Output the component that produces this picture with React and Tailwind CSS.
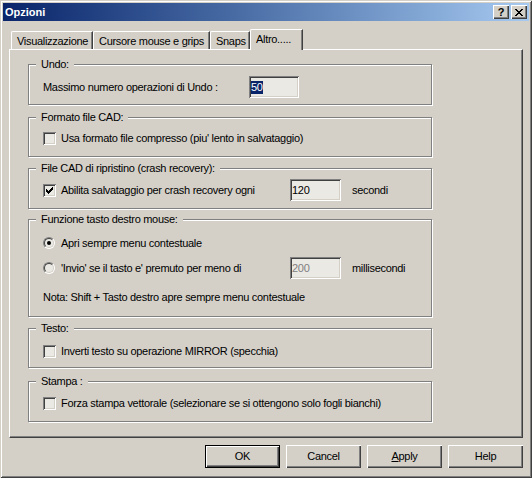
import React from "react";

const bevelOut =
  "shadow-[inset_1px_1px_0_#ffffff,inset_-1px_-1px_0_#404040,inset_-2px_-2px_0_#808080]";
const bevelIn =
  "shadow-[inset_1px_1px_0_#808080,inset_-1px_-1px_0_#ffffff,inset_2px_2px_0_#404040,inset_-2px_-2px_0_#d4d0c8]";

const Check = ({ checked }) => (
  <span className={`w-[13px] h-[13px] shrink-0 bg-[#ebe9e4] flex items-center justify-center ${bevelIn}`}>
    {checked && (
      <svg width="7" height="7" viewBox="0 0 7 7" shapeRendering="crispEdges">
        <path
          fill="#000"
          d="M6 0h1v1h-1z M5 1h2v1h-2z M0 2h1v1h-1z M4 2h3v1h-3z M0 3h2v1h-2z M3 3h3v1h-3z M0 4h5v1h-5z M1 5h3v1h-3z M2 6h1v1h-1z"
        />
      </svg>
    )}
  </span>
);

const Radio = ({ checked }) => (
  <span className="w-[12px] h-[12px] shrink-0 rounded-full bg-[#ebe9e4] flex items-center justify-center border border-t-[#808080] border-l-[#808080] border-b-white border-r-white">
    <span className="w-[10px] h-[10px] rounded-full border border-t-[#404040] border-l-[#404040] border-b-[#d4d0c8] border-r-[#d4d0c8] flex items-center justify-center">
      {checked && <span className="w-[4px] h-[4px] rounded-full bg-black" />}
    </span>
  </span>
);

const TextBox = ({ children, className = "" }) => (
  <div className={`h-[22px] bg-[#ebe9e4] flex items-center pl-[2px] ${bevelIn} ${className}`}>
    {children}
  </div>
);

const Group = ({ title, className = "", children }) => (
  <div
    className={`w-[404px] border border-[#808080] shadow-[inset_1px_1px_0_#ffffff,1px_1px_0_#ffffff] pl-[14px] ${className}`}
  >
    <div className="-mt-[7px] -ml-[7px] w-fit bg-[#d4d0c8] px-[5px] leading-[13px]">{title}</div>
    {children}
  </div>
);

const Tab = ({ label, width, selected }) => (
  <div
    className={`border-t border-l border-white border-r border-r-[#404040] rounded-tl-[2px] shadow-[inset_-1px_0_0_#808080] bg-[#d4d0c8] pl-[5px] flex items-center whitespace-nowrap overflow-hidden ${
      selected ? "h-[21px] -mb-[1px] relative z-10 pb-[1px]" : "h-[18px] pt-[2px]"
    } ${width}`}
  >
    {label}
  </div>
);

const Button = ({ children, isDefault }) => (
  <div
    className={`w-[75px] h-[23px] flex items-center justify-center bg-[#d4d0c8] ${
      isDefault
        ? "border border-black shadow-[inset_1px_1px_0_#ffffff,inset_-1px_-1px_0_#404040,inset_-2px_-2px_0_#808080]"
        : bevelOut
    }`}
  >
    {children}
  </div>
);

export default function App() {
  return (
    <div className="w-[532px] h-[478px] bg-[#d4d0c8] p-[3px] flex flex-col text-[11px] leading-[13px] tracking-[-0.3px] text-black font-['Liberation_Sans',Arial,sans-serif] shadow-[inset_1px_1px_0_#d4d0c8,inset_-1px_-1px_0_#404040,inset_2px_2px_0_#ffffff,inset_-2px_-2px_0_#808080]">
      {/* Title bar */}
      <div className="h-[18px] flex items-center bg-linear-to-r from-[#0a246a] to-[#a6caf0] pl-[2px] pr-[2px]">
        <span className="font-bold text-white text-[11px] tracking-normal">Opzioni</span>
        <div className="ml-auto flex gap-[2px]">
          <div className={`w-[16px] h-[14px] bg-[#d4d0c8] flex items-center justify-center font-bold text-[11px] ${bevelOut}`}>
            ?
          </div>
          <div className={`w-[16px] h-[14px] bg-[#d4d0c8] flex items-center justify-center ${bevelOut}`}>
            <svg width="8" height="7" viewBox="0 0 8 7" shapeRendering="crispEdges">
              <path
                fill="#000"
                d="M0 0h2v1h-2z M6 0h2v1h-2z M1 1h2v1h-2z M5 1h2v1h-2z M2 2h4v1h-4z M3 3h2v1h-2z M2 4h4v1h-4z M1 5h2v1h-2z M5 5h2v1h-2z M0 6h2v1h-2z M6 6h2v1h-2z"
              />
            </svg>
          </div>
        </div>
      </div>

      {/* Tabs */}
      <div className="mt-[8px] h-[20px] flex items-end ml-[8px]">
        <Tab label="Visualizzazione" width="w-[82px]" />
        <Tab label="Cursore mouse e grips" width="w-[117px]" />
        <Tab label="Snaps" width="w-[40px]" />
        <Tab label="Altro....." width="w-[53px]" selected />
      </div>

      {/* Panel */}
      <div className="mx-[6px] h-[389px] border-t border-l border-white border-r border-b border-r-[#404040] border-b-[#404040] shadow-[inset_-1px_-1px_0_#808080] pl-[18px] pt-[14px] flex flex-col">
        <Group title="Undo:" className="h-[41px]">
          <div className="mt-[5px] h-[22px] flex items-center">
            <span className="w-[206px]">Massimo numero operazioni di Undo :</span>
            <TextBox className="w-[50px]">
              <span className="bg-[#0a246a] text-white">50</span>
            </TextBox>
          </div>
        </Group>

        <Group title="Formato file CAD:" className="h-[40px] mt-[12px]">
          <div className="mt-[3px] h-[22px] flex items-center">
            <Check />
            <span className="ml-[5px]">Usa formato file compresso (piu' lento in salvataggio)</span>
          </div>
        </Group>

        <Group title="File CAD di ripristino (crash recovery):" className="h-[41px] mt-[11px]">
          <div className="mt-[4px] h-[22px] flex items-center">
            <span className="w-[247px] flex items-center">
              <Check checked />
              <span className="ml-[5px]">Abilita salvataggio per crash recovery ogni</span>
            </span>
            <TextBox className="w-[51px]">120</TextBox>
            <span className="ml-[11px]">secondi</span>
          </div>
        </Group>

        <Group title="Funzione tasto destro mouse:" className="h-[98px] mt-[10px]">
          <div className="mt-[6px] h-[22px] flex items-center">
            <Radio checked />
            <span className="ml-[6px]">Apri sempre menu contestuale</span>
          </div>
          <div className="mt-[3px] h-[22px] flex items-center">
            <span className="w-[247px] flex items-center">
              <Radio />
              <span className="ml-[6px]">'Invio' se il tasto e' premuto per meno di</span>
            </span>
            <TextBox className="w-[51px] text-[#808080]">200</TextBox>
            <span className="ml-[11px]">millisecondi</span>
          </div>
          <div className="mt-[7px] h-[22px] flex items-center">
            Nota: Shift + Tasto destro apre sempre menu contestuale
          </div>
        </Group>

        <Group title="Testo:" className="h-[40px] mt-[11px]">
          <div className="mt-[5px] h-[22px] flex items-center">
            <Check />
            <span className="ml-[5px]">Inverti testo su operazione MIRROR (specchia)</span>
          </div>
        </Group>

        <Group title="Stampa :" className="h-[41px] mt-[13px]">
          <div className="mt-[4px] h-[22px] flex items-center">
            <Check />
            <span className="ml-[5px]">Forza stampa vettorale (selezionare se si ottengono solo fogli bianchi)</span>
          </div>
        </Group>
      </div>

      {/* Buttons */}
      <div className="mt-[7px] flex justify-end gap-[6px] pr-[6px]">
        <Button isDefault>OK</Button>
        <Button>Cancel</Button>
        <Button>
          <span>
            <u>A</u>pply
          </span>
        </Button>
        <Button>Help</Button>
      </div>
    </div>
  );
}
